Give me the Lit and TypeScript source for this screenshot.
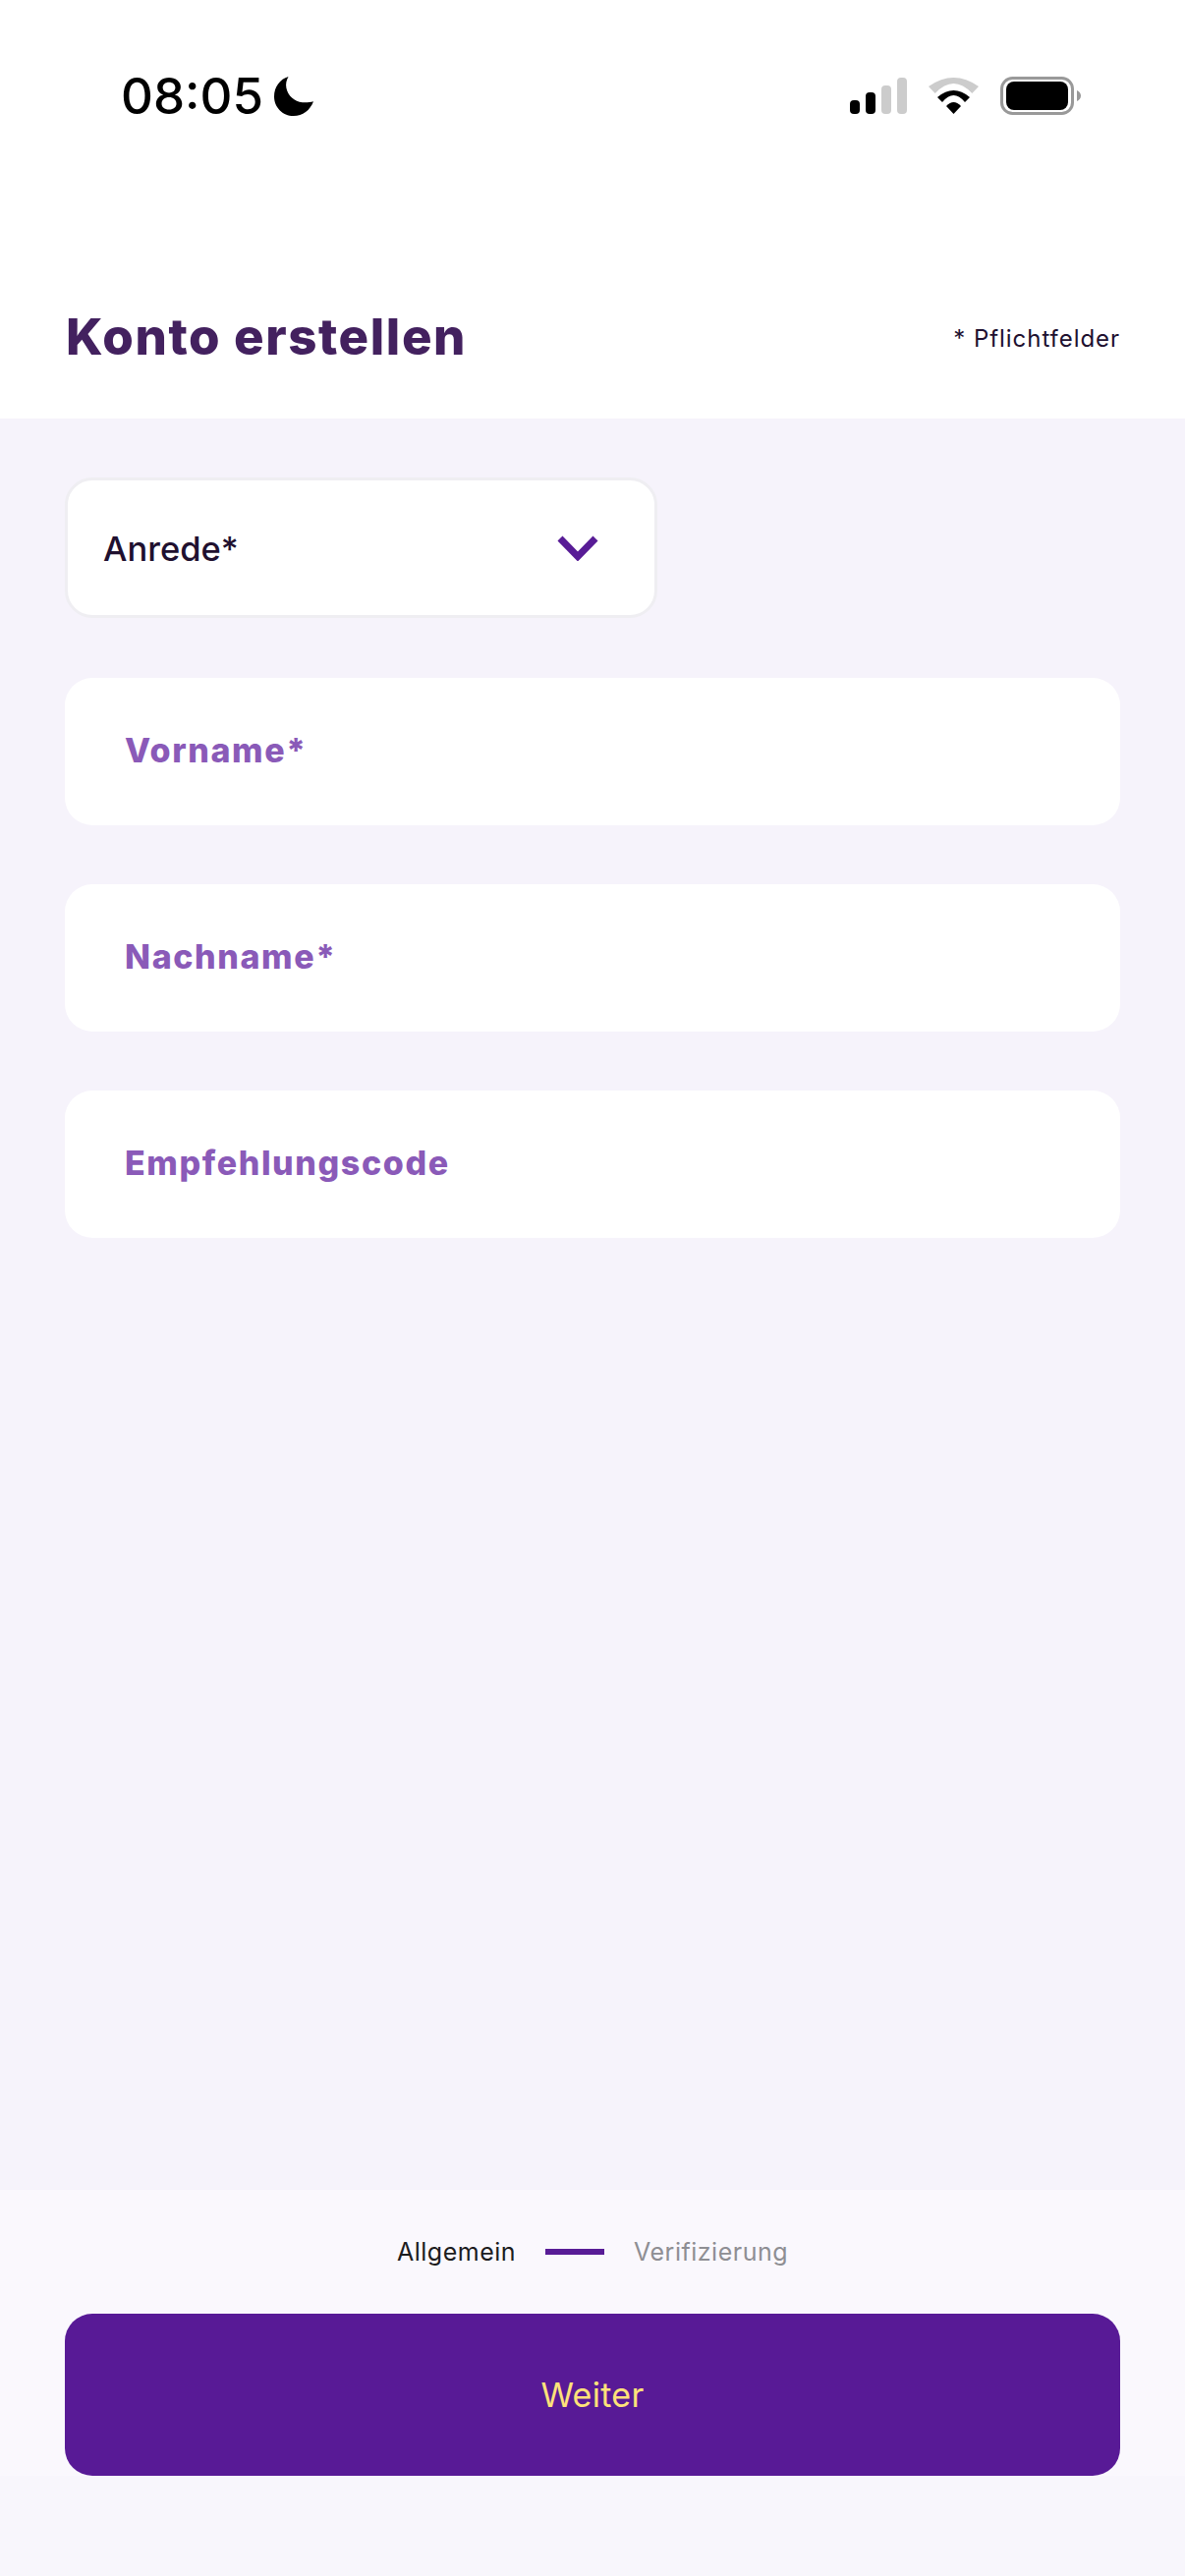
import { LitElement, html, css, svg } from 'lit';
import { customElement } from 'lit/decorators.js';

const FIELDS = ['Vorname*', 'Nachname*', 'Empfehlungscode'];

const moon = svg`<path d="M14.500 0C12.500 3.400 11.600 7.400 12.400 11.400C13.800 19.200 20.800 25.400 28.800 26.200C33 26.600 36.600 26 40 25.200C36.600 34.200 29 40 19.800 40C8.600 40 0 31.200 0 20.200C0 10.600 6 2.400 14.500 0Z" fill="#000"/>`;

@customElement('app-root')
export class AppRoot extends LitElement {
  private _statusIcons() {
    return html`
      <svg class="signal" width="58" height="37" viewBox="0 0 58 37">
        <rect x="0" y="23" width="10" height="14" rx="4" fill="#000"/>
        <rect x="16" y="15" width="10" height="22" rx="4" fill="#000"/>
        <rect x="32" y="8" width="10" height="29" rx="4" fill="#ccc"/>
        <rect x="48" y="0" width="10" height="37" rx="4" fill="#ccc"/>
      </svg>
      <svg class="wifi" width="51" height="37" viewBox="0 0 51 37">
        <path d="M0 9Q25.500 -9 51 9L44.300 16Q25.500 -4 6.700 16Z" fill="#ccc"/>
        <path d="M9 20Q25.500 6 42 20L37 25Q25.500 11 14 25Z" fill="#000"/>
        <path d="M18 29Q25.500 21 33 29L25.500 37Z" fill="#000"/>
      </svg>
      <svg class="battery" width="82" height="39" viewBox="0 0 82 39">
        <rect x="1.500" y="1.500" width="72" height="36" rx="11" fill="none" stroke="#999" stroke-width="3"/>
        <rect x="6" y="5" width="63" height="29" rx="8" fill="#000"/>
        <path d="M78 14C80.500 15 82 17 82 19.500C82 22 80.500 24 78 25Z" fill="#999"/>
      </svg>
    `;
  }

  render() {
    return html`
      <div class="page">
        <header class="top">
          <div class="status">
            <div class="clock">
              <span class="time">08:05</span>
              <svg class="moon" width="40" height="40" viewBox="0 0 40 40">${moon}</svg>
            </div>
            <div class="status-icons">${this._statusIcons()}</div>
          </div>
          <div class="title-row">
            <h1>Konto erstellen</h1>
            <span class="required">* Pflichtfelder</span>
          </div>
        </header>

        <main class="form">
          <div class="select">
            <span>Anrede*</span>
            <svg width="42" height="26" viewBox="0 0 42 26">
              <path d="M3 3L21 21.500L39 3" fill="none" stroke="#581c96" stroke-width="7"/>
            </svg>
          </div>
          ${FIELDS.map((label) => html`<div class="field">${label}</div>`)}
        </main>

        <footer class="bottom">
          <div class="steps">
            <span class="step">Allgemein</span>
            <span class="step-line"></span>
            <span class="step todo">Verifizierung</span>
          </div>
          <button class="next">Weiter</button>
        </footer>
        <div class="home-space"></div>
      </div>
    `;
  }

  static styles = css`
    :host {
      display: block;
      font-family: Inter, 'Noto Sans', sans-serif;
    }
    .page {
      display: flex;
      flex-direction: column;
      height: 2622px;
      background: #f6f3fb;
    }
    .top {
      background: #fff;
      height: 426px;
      box-sizing: border-box;
      display: flex;
      flex-direction: column;
    }
    .status {
      display: flex;
      justify-content: space-between;
      align-items: flex-start;
      padding: 78px 106px 0 123px;
    }
    .clock {
      display: flex;
      align-items: center;
      gap: 11px;
      height: 40px;
    }
    .time {
      font-size: 51px;
      font-weight: 500;
      line-height: 40px;
      color: #000;
    }
    .status-icons {
      display: flex;
      align-items: flex-start;
      gap: 22px;
    }
    .signal, .wifi { margin-top: 1px; }
    .title-row {
      display: flex;
      justify-content: space-between;
      align-items: center;
      padding: 0 66px 0 67px;
      margin-top: 192px;
    }
    h1 {
      margin: 0;
      font-size: 51px;
      font-weight: 800;
      letter-spacing: 1.6px;
      line-height: 66px;
      color: #43215f;
    }
    .required {
      font-size: 24px;
      letter-spacing: 0.95px;
      padding-top: 2px;
      color: #20102f;
    }
    .form {
      flex: 1;
      display: flex;
      flex-direction: column;
      align-items: flex-start;
      gap: 60px;
      padding: 60px 66px 0;
    }
    .select {
      box-sizing: border-box;
      width: 603px;
      height: 143px;
      margin-bottom: 1px;
      display: flex;
      align-items: center;
      justify-content: space-between;
      padding: 2px 57px 0 36px;
      background: #fff;
      border: 3px solid #efeef2;
      border-radius: 28px;
      font-size: 34.500px;
      font-weight: 500;
      color: #20102f;
    }
    .select svg { margin-top: -2px; }
    .field {
      box-sizing: border-box;
      width: 100%;
      height: 150px;
      display: flex;
      align-items: center;
      padding: 0 0 3px 61px;
      background: #fff;
      border-radius: 28px;
      font-size: 34px;
      font-weight: 800;
      letter-spacing: 1.6px;
      color: #8a5ab8;
    }
    .bottom {
      background: #faf8fd;
      height: 291px;
      box-sizing: border-box;
      padding: 0 66px;
      display: flex;
      flex-direction: column;
    }
    .steps {
      display: flex;
      justify-content: center;
      align-items: center;
      gap: 30px;
      height: 126px;
    }
    .step {
      font-size: 25px;
      letter-spacing: 0.5px;
      color: #1c1c1e;
    }
    .step.todo { color: #8e8e93; }
    .step-line {
      width: 60px;
      height: 6px;
      background: #581c96;
    }
    .next {
      height: 165px;
      border: 0;
      border-radius: 28px;
      background: #581a96;
      color: #ffe27a;
      font: inherit;
      font-size: 34px;
      letter-spacing: 0.3px;
    }
    .home-space {
      height: 102px;
      background: #f8f6fc;
    }
  `;
}

declare global {
  interface HTMLElementTagNameMap {
    'app-root': AppRoot;
  }
}
